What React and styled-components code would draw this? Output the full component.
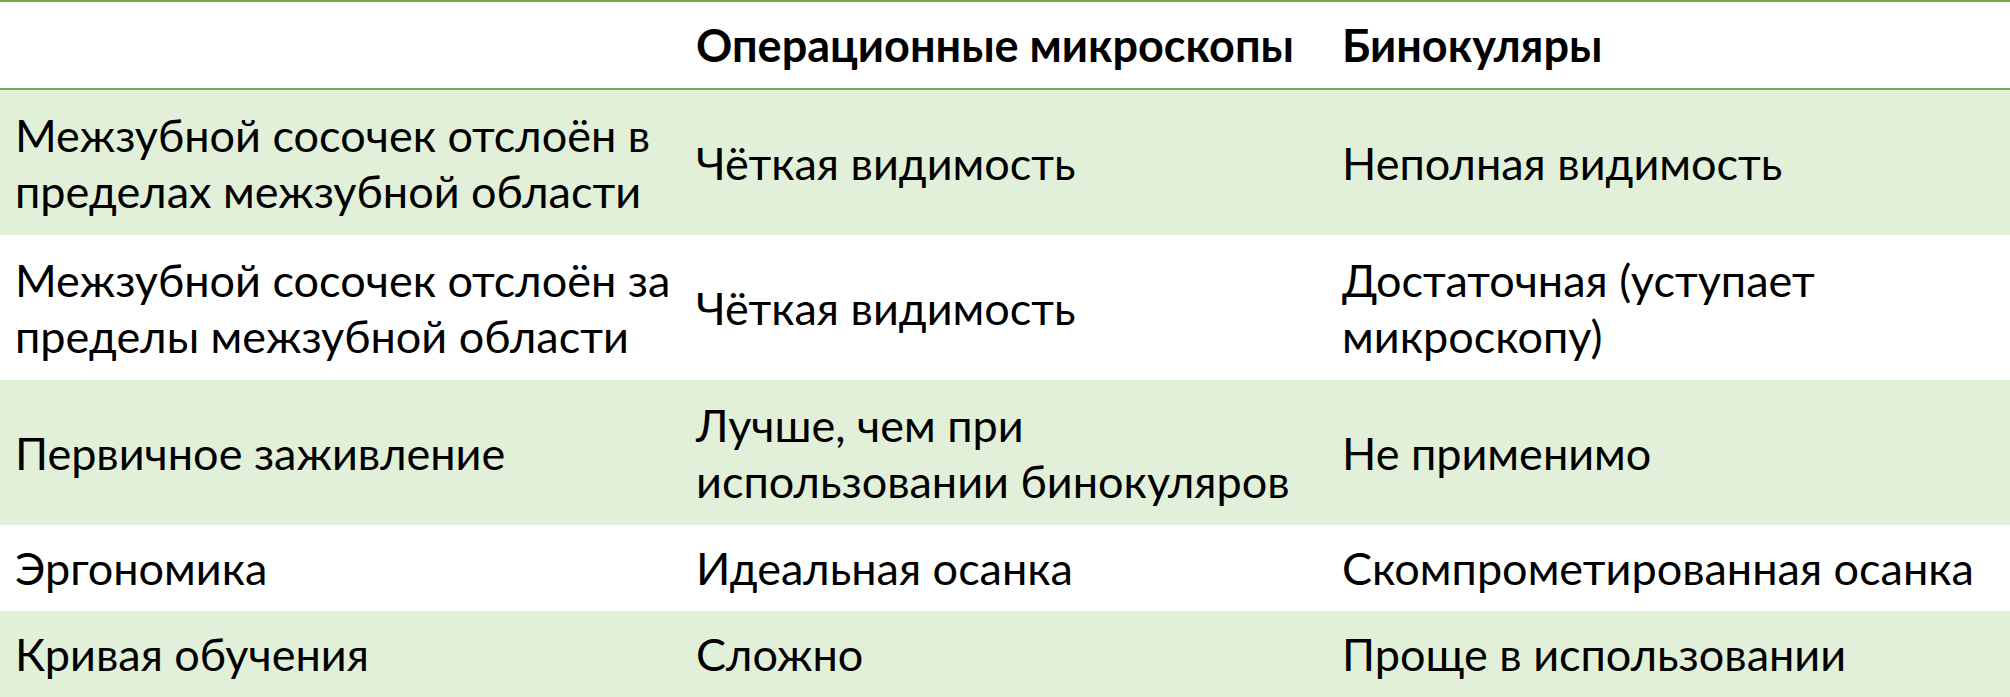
import styled, { createGlobalStyle } from 'styled-components';

const GlobalStyle = createGlobalStyle`
  html, body {
    margin: 0;
    padding: 0;
    background: #ffffff;
  }
  body {
    font-family: Lato, "Open Sans", "Noto Sans", sans-serif;
    color: #000000;
  }
`;

const rows = [
  {
    feature: ['Межзубной сосочек отслоён в', 'пределах межзубной области'],
    microscope: ['Чёткая видимость'],
    binocular: ['Неполная видимость'],
  },
  {
    feature: ['Межзубной сосочек отслоён за', 'пределы межзубной области'],
    microscope: ['Чёткая видимость'],
    binocular: ['Достаточная (уступает', 'микроскопу)'],
  },
  {
    feature: ['Первичное заживление'],
    microscope: ['Лучше, чем при', 'использовании бинокуляров'],
    binocular: ['Не применимо'],
  },
  {
    feature: ['Эргономика'],
    microscope: ['Идеальная осанка'],
    binocular: ['Скомпрометированная осанка'],
  },
  {
    feature: ['Кривая обучения'],
    microscope: ['Сложно'],
    binocular: ['Проще в использовании'],
  },
];

const Lines = ({ lines }) =>
  lines.map((line, i) => (
    <span key={i}>
      {line}
      {i < lines.length - 1 && <br />}
    </span>
  ));

const App = () => (
  <>
    <GlobalStyle />
    <Table>
      <HeaderRow>
        <Cell />
        <Cell $bold>Операционные микроскопы</Cell>
        <Cell $bold>Бинокуляры</Cell>
      </HeaderRow>
      {rows.map((row, i) => (
        <Row key={i} $shaded={i % 2 === 0} $tall={row.feature.length > 1 || row.microscope.length > 1}>
          <Cell><Lines lines={row.feature} /></Cell>
          <Cell><Lines lines={row.microscope} /></Cell>
          <Cell><Lines lines={row.binocular} /></Cell>
        </Row>
      ))}
    </Table>
  </>
);

export default App;

const Table = styled.div`
  width: 2010px;
  border-top: 2px solid #70ad47;
  border-bottom: 3px solid #70ad47;
  box-sizing: border-box;
`;

const Row = styled.div`
  display: grid;
  grid-template-columns: 681px 646px 1fr;
  align-items: center;
  height: ${(p) => (p.$tall ? '145px' : '86px')};
  background: ${(p) => (p.$shaded ? '#e2efd9' : '#ffffff')};
`;

const HeaderRow = styled(Row)`
  height: 86px;
  background: #ffffff;
  border-bottom: 2px solid #70ad47;
`;

const Cell = styled.div`
  padding: 0 15px;
  font-size: 45px;
  line-height: 56px;
  font-weight: ${(p) => (p.$bold ? 700 : 400)};
  white-space: nowrap;
`;
